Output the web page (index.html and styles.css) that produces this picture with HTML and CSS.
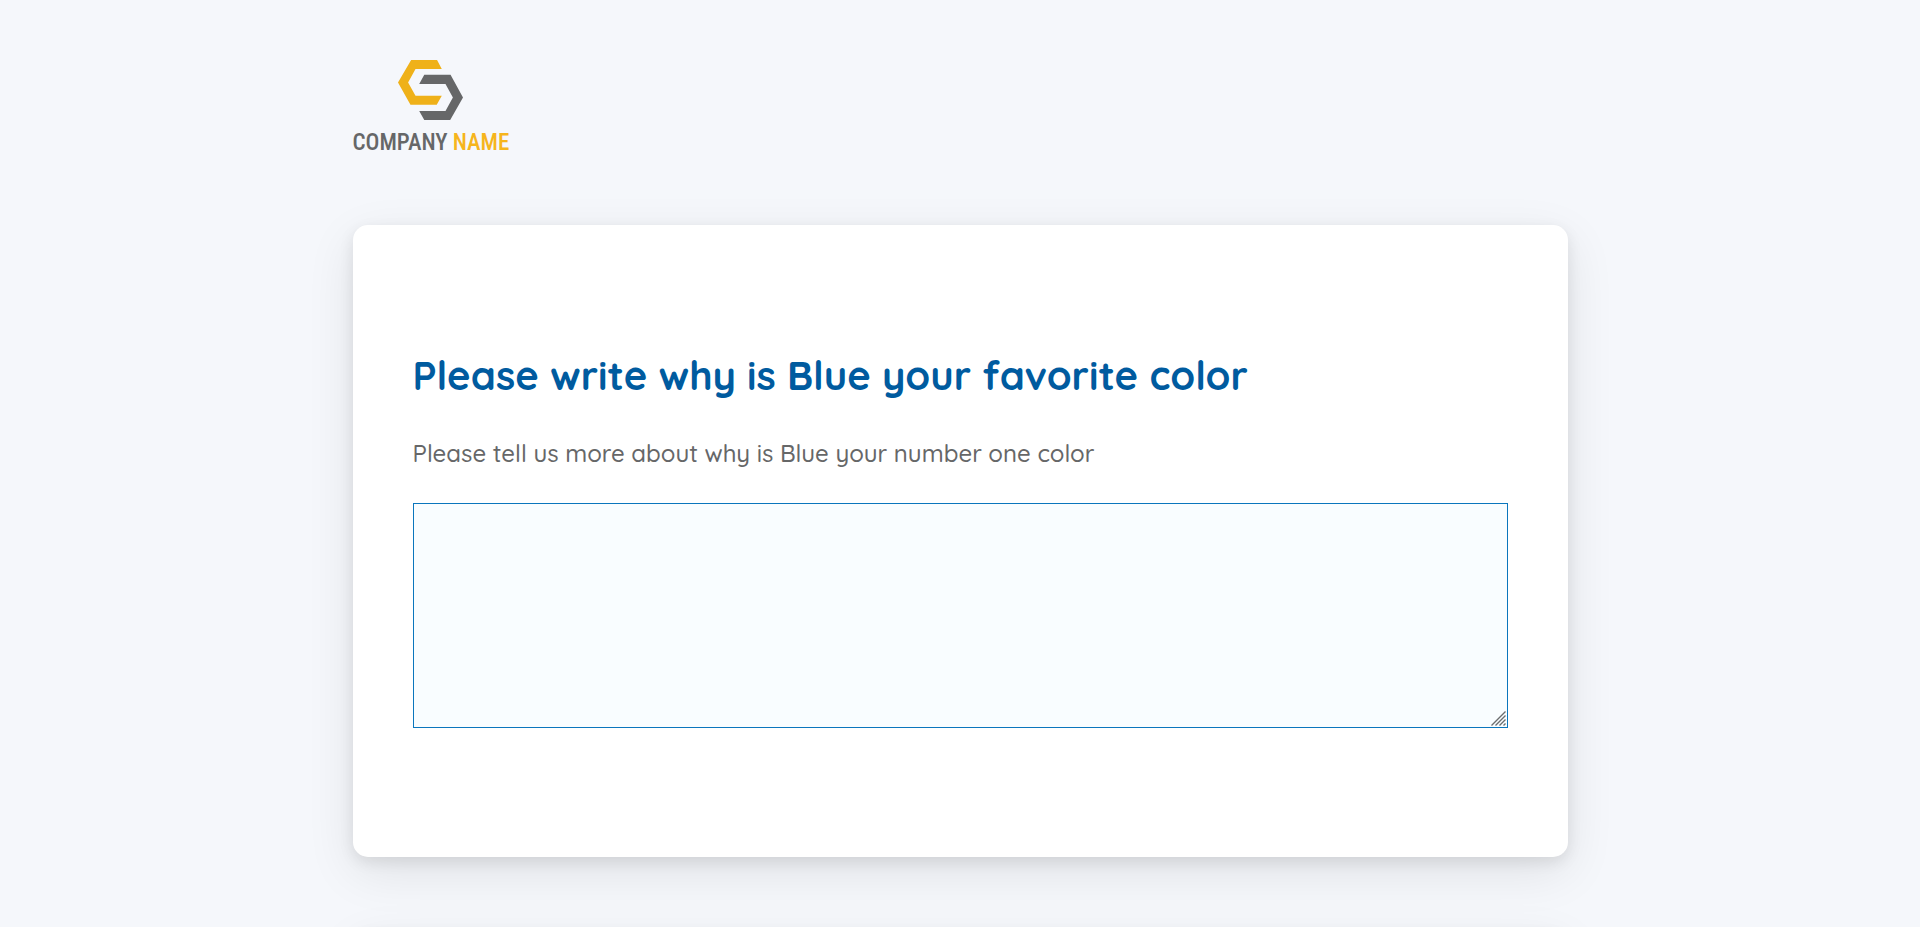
FILE: index.html
```html
<!DOCTYPE html>
<html lang="en">
<head>
<meta charset="utf-8">
<meta name="viewport" content="width=device-width, initial-scale=1">
<title>Survey</title>
<link rel="stylesheet" href="styles.css">
</head>
<body>
<div class="page">
  <header class="brand">
    <svg class="brand-mark" viewBox="175 30 193 178" aria-hidden="true">
      <path fill="#efb119" d="M214 30H291L305 57H227L205 97L227 136H305L290 163H212L175 97Z"/>
      <path fill="#666768" d="M253 74H331L368 141L330 208H253L238 181H316L338 141L316 101H238Z"/>
    </svg>
    <div class="brand-name"><span>COMPANY</span><span class="brand-accent">NAME</span></div>
  </header>
  <main class="questions">
    <section class="card">
      <h1 class="title">Please write why is Blue your favorite color</h1>
      <label class="description" for="answer">Please tell us more about why is Blue your number one color</label>
      <div class="field">
        <textarea class="answer" id="answer"></textarea>
        <svg class="grip" viewBox="0 0 15 15" aria-hidden="true">
          <path d="M0.5 14.5L14.5 0.5M4.5 14.5L14.5 4.5M8.5 14.5L14.5 8.5M12.5 14.5L14.5 12.5"/>
        </svg>
      </div>
    </section>
    <section class="card"></section>
  </main>
</div>
</body>
</html>
```
FILE: styles.css
```css
* {
  box-sizing: border-box;
}

html {
  scrollbar-width: none;
}

body {
  margin: 0;
  background: #f5f7fb;
  color: #666768;
  font-family: Quicksand, Lato, sans-serif;
}

.page {
  max-width: 1215px;
  margin: 0 auto;
  padding-top: 60px;
}

.brand {
  display: flex;
  flex-direction: column;
  align-items: center;
  width: max-content;
  margin-bottom: 69px;
}

.brand-mark {
  width: 65px;
  height: 60px;
}

.brand-name {
  display: flex;
  gap: 5px;
  margin-top: 9px;
  font: 500 23px/27px "Roboto Condensed", Roboto, sans-serif;
}

.brand-accent {
  color: #f6b51d;
}

.questions {
  display: flex;
  flex-direction: column;
  gap: 74px;
}

.card {
  min-height: 632px;
  padding: 120px 60px;
  border-radius: 15px;
  background: #fff;
  box-shadow: 0 5px 15px rgba(0, 0, 0, 0.09), 0 15px 50px rgba(0, 0, 0, 0.09);
}

.title {
  margin: 0;
  color: #005b9f;
  font-size: 40px;
  font-weight: 700;
  line-height: 60px;
}

.description {
  display: block;
  margin: 31px 0 33px;
  font-size: 24px;
  font-weight: 500;
  line-height: 34px;
}

.field {
  position: relative;
}

.answer {
  display: block;
  width: 100%;
  height: 225px;
  padding: 15px;
  border: 1px solid #0b76bd;
  border-radius: 0;
  background: #f9fdff;
  color: inherit;
  font: inherit;
  font-size: 24px;
  resize: vertical;
}

.answer::-webkit-resizer {
  background: transparent;
}

.grip {
  position: absolute;
  right: 2px;
  bottom: 2px;
  width: 15px;
  height: 15px;
  fill: none;
  stroke: #6b6d6e;
  stroke-width: 1.4;
  pointer-events: none;
}
```
